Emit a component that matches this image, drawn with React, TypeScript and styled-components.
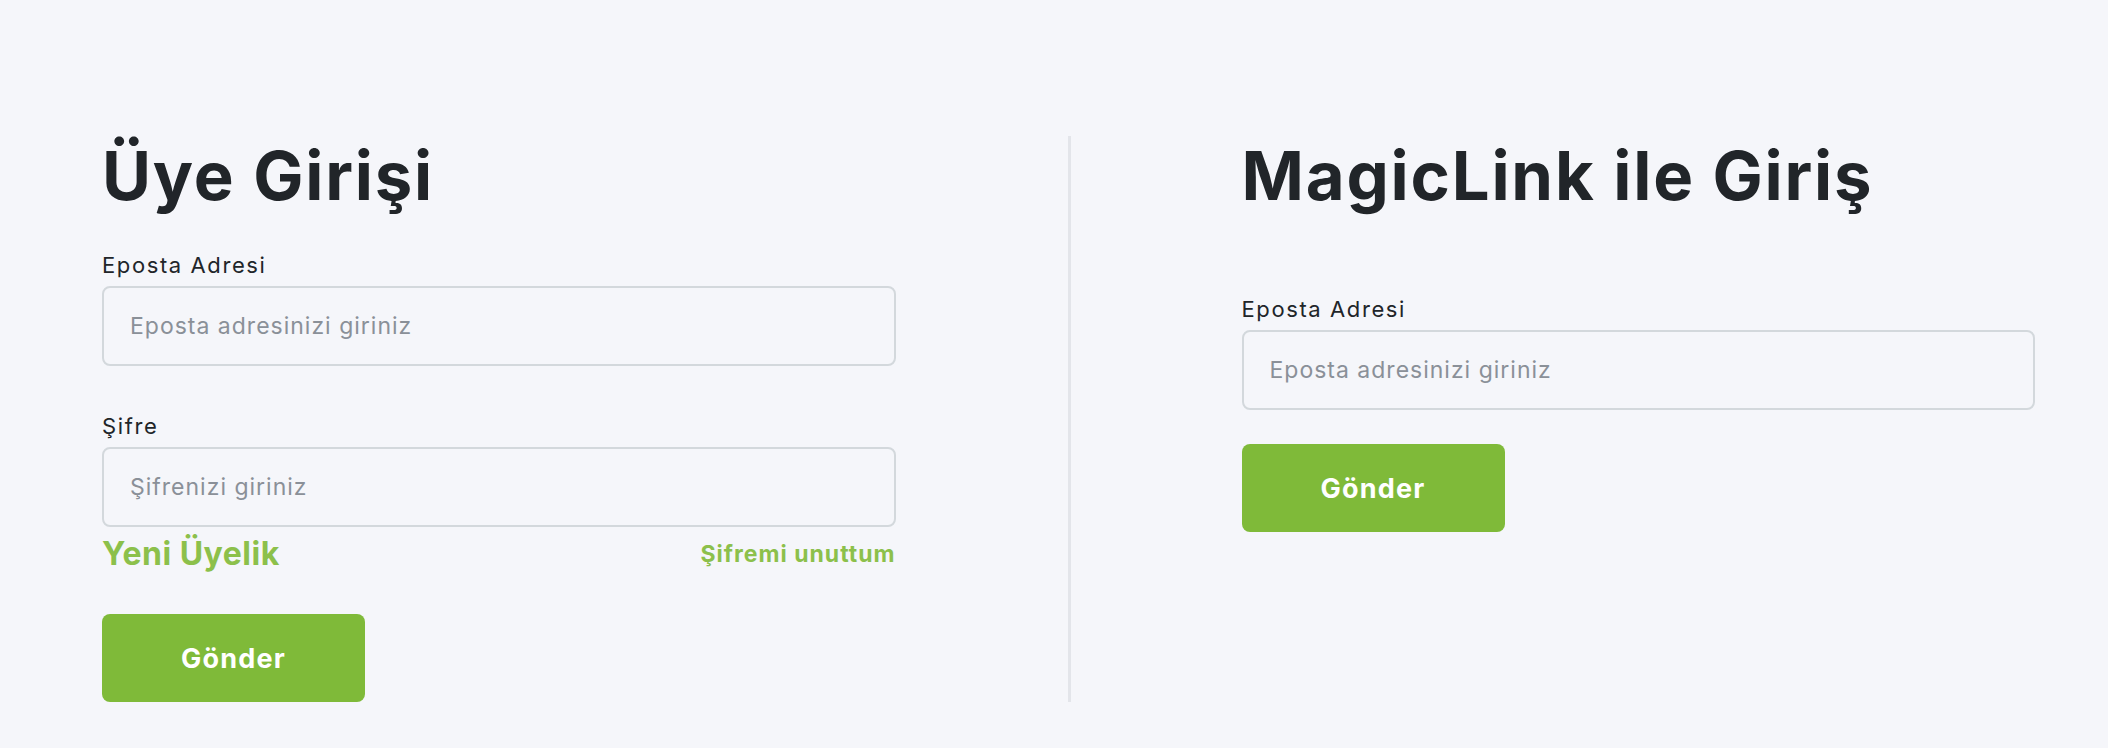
import styled, { createGlobalStyle } from "styled-components";

const GlobalStyle = createGlobalStyle`
  html, body {
    margin: 0;
    padding: 0;
    background: #f5f6fa;
  }
  body {
    font-family: Inter, "Liberation Sans", sans-serif;
    color: #212529;
  }
`;

const Page = styled.div`
  min-height: 100vh;
  box-sizing: border-box;
  padding: 136px 73px 0 102px;
  background: #f5f6fa;
`;

const Columns = styled.div`
  display: flex;
  align-items: stretch;
`;

const Column = styled.div`
  width: 794px;
  display: flex;
  flex-direction: column;
  align-items: flex-start;
`;

const Divider = styled.div`
  width: 3px;
  margin: 0 171px 0 172px;
  background: #e3e5ea;
`;

const Title = styled.h1<{ $gap: number }>`
  margin: 0 0 ${({ $gap }) => $gap}px;
  font-size: 67px;
  line-height: 80px;
  font-weight: 700;
  letter-spacing: 1.8px;
  color: #212529;
`;

const Field = styled.div`
  width: 100%;
  display: flex;
  flex-direction: column;
  & + & {
    margin-top: 45px;
  }
`;

const Label = styled.label`
  font-size: 22px;
  line-height: 30px;
  font-weight: 400;
  letter-spacing: 1.6px;
  margin-bottom: 6px;
  color: #212529;
`;

const Input = styled.input`
  box-sizing: border-box;
  width: 100%;
  height: 80px;
  padding: 0 26px;
  border: 2px solid #d3d8dc;
  border-radius: 8px;
  background: #f5f6fa;
  font-family: inherit;
  font-size: 23px;
  letter-spacing: 1px;
  color: #212529;
  outline: none;

  &::placeholder {
    color: #8a9098;
  }
`;

const LinkRow = styled.div`
  width: 100%;
  margin-top: 7px;
  display: flex;
  align-items: center;
  justify-content: space-between;
`;

const BigLink = styled.a`
  font-size: 32px;
  line-height: 40px;
  font-weight: 700;
  letter-spacing: 0.5px;
  color: #8cc04b;
  text-decoration: none;
`;

const SmallLink = styled.a`
  font-size: 23px;
  line-height: 28px;
  font-weight: 700;
  letter-spacing: 1px;
  color: #8cc04b;
  text-decoration: none;
`;

const SubmitButton = styled.button<{ $top: number }>`
  margin-top: ${({ $top }) => $top}px;
  width: 263px;
  height: 88px;
  border: none;
  border-radius: 8px;
  background: #7fba39;
  color: #ffffff;
  font-family: inherit;
  font-size: 27px;
  font-weight: 700;
  letter-spacing: 1.2px;
  cursor: pointer;
`;

export default function App() {
  return (
    <>
      <GlobalStyle />
      <Page>
        <Columns>
          <Column>
            <Title $gap={34}>Üye Girişi</Title>
            <Field>
              <Label>Eposta Adresi</Label>
              <Input type="email" placeholder="Eposta adresinizi giriniz" />
            </Field>
            <Field>
              <Label>Şifre</Label>
              <Input type="password" placeholder="Şifrenizi giriniz" />
            </Field>
            <LinkRow>
              <BigLink href="#">Yeni Üyelik</BigLink>
              <SmallLink href="#">Şifremi unuttum</SmallLink>
            </LinkRow>
            <SubmitButton $top={40}>Gönder</SubmitButton>
          </Column>
          <Divider />
          <Column>
            <Title $gap={78}>MagicLink ile Giriş</Title>
            <Field>
              <Label>Eposta Adresi</Label>
              <Input type="email" placeholder="Eposta adresinizi giriniz" />
            </Field>
            <SubmitButton $top={34}>Gönder</SubmitButton>
          </Column>
        </Columns>
      </Page>
    </>
  );
}
